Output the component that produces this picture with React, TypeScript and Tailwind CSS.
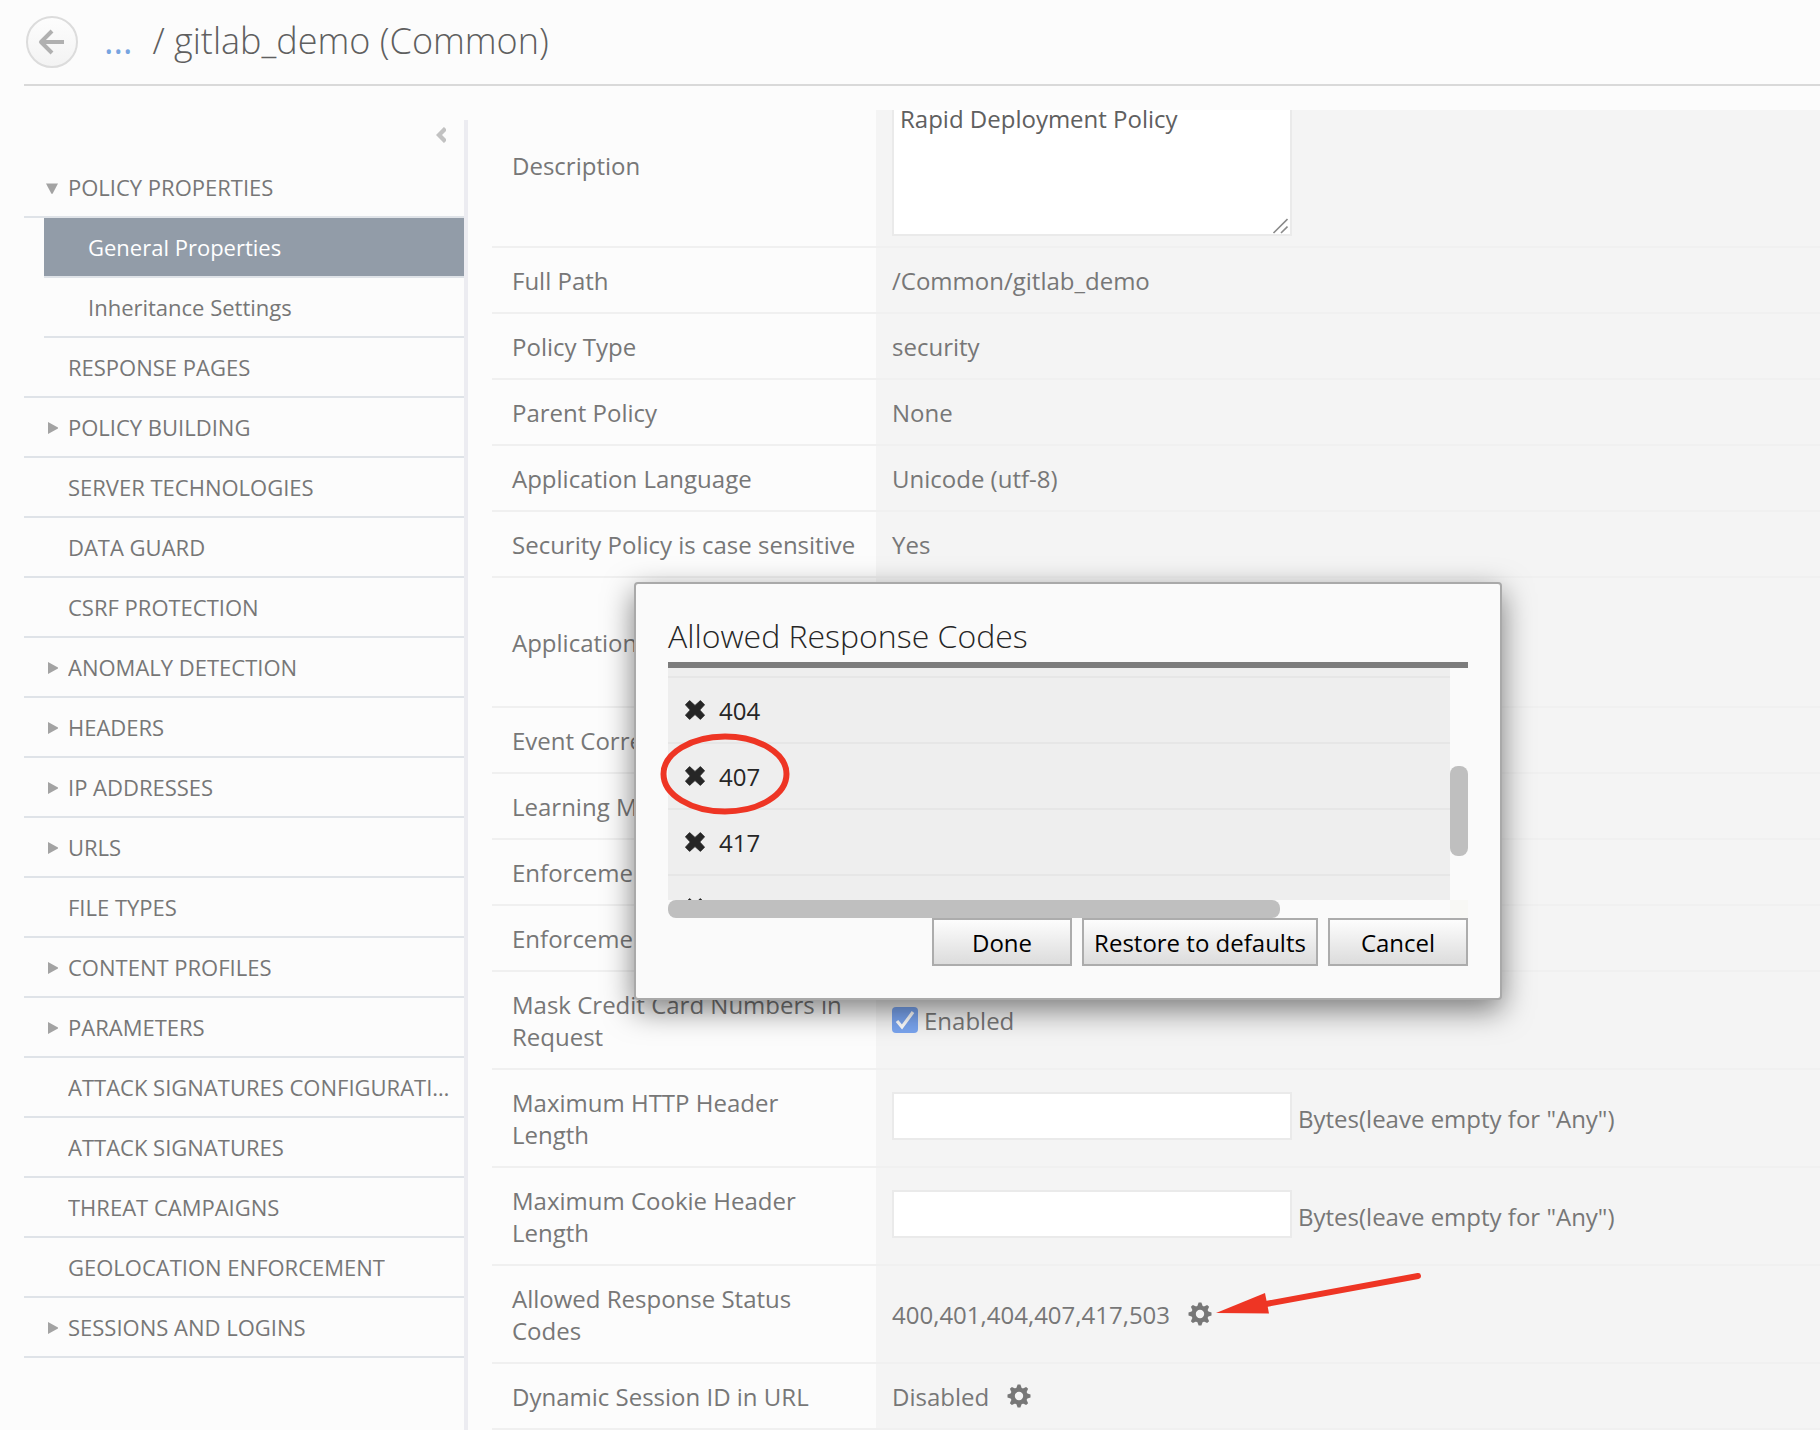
import type { ReactNode } from "react";

const GRAY_TRI = "#a3a3a3";

type NavItem = { text: string; arrow?: "down" | "right"; children?: { text: string; active?: boolean }[] };

const nav: NavItem[] = [
  {
    text: "POLICY PROPERTIES",
    arrow: "down",
    children: [{ text: "General Properties", active: true }, { text: "Inheritance Settings" }],
  },
  { text: "RESPONSE PAGES" },
  { text: "POLICY BUILDING", arrow: "right" },
  { text: "SERVER TECHNOLOGIES" },
  { text: "DATA GUARD" },
  { text: "CSRF PROTECTION" },
  { text: "ANOMALY DETECTION", arrow: "right" },
  { text: "HEADERS", arrow: "right" },
  { text: "IP ADDRESSES", arrow: "right" },
  { text: "URLS", arrow: "right" },
  { text: "FILE TYPES" },
  { text: "CONTENT PROFILES", arrow: "right" },
  { text: "PARAMETERS", arrow: "right" },
  { text: "ATTACK SIGNATURES CONFIGURATION" },
  { text: "ATTACK SIGNATURES" },
  { text: "THREAT CAMPAIGNS" },
  { text: "GEOLOCATION ENFORCEMENT" },
  { text: "SESSIONS AND LOGINS", arrow: "right" },
];

function Triangle({ dir }: { dir?: "down" | "right" }) {
  return (
    <svg className="w-4 h-4 shrink-0" viewBox="0 0 16 16" aria-hidden="true">
      {dir === "down" && <path d="M2 4.5h12L8.6 14.8H7.4z" fill={GRAY_TRI} />}
      {dir === "right" && <path d="M4 3v12L14 9.6V8.4z" fill={GRAY_TRI} />}
    </svg>
  );
}

function Gear() {
  return (
    <svg className="w-6 h-6" viewBox="0 0 24 24" aria-hidden="true">
      <g fill="#777777">
        {[0, 45, 90, 135, 180, 225, 270, 315].map((a) => (
          <path key={a} d="M9 5 10.6 0.5h2.8L15 5z" transform={`rotate(${a} 12 12)`} />
        ))}
      </g>
      <circle cx="12" cy="12" r="6.4" fill="none" stroke="#777777" strokeWidth="4.4" />
    </svg>
  );
}

function Cross() {
  return (
    <svg className="w-5 h-5" viewBox="0 0 20 20" aria-hidden="true">
      <path
        d="M4.6 0.6 10 5.4 15.4 0.6 19.6 4.8 14.8 10 19.6 15.2 15.4 19.4 10 14.6 4.6 19.4 0.4 15.2 5.2 10 0.4 4.8z"
        fill="#262626"
        stroke="#262626"
        strokeWidth="0.8"
        strokeLinejoin="round"
      />
    </svg>
  );
}

function Row({ label, htmlFor, tall, children }: { label: string; htmlFor?: string; tall?: boolean; children?: ReactNode }) {
  return (
    <tr className="border-b-2 border-[#f0f0f0]">
      <th
        scope="row"
        className={
          tall
            ? "w-96 h-[130px] pl-5 pr-4 pt-0.5 text-left align-middle font-normal whitespace-pre-line"
            : "w-96 pl-5 pr-4 pt-[17px] pb-[15px] text-left align-middle font-normal whitespace-pre-line"
        }
      >
        {htmlFor ? <label htmlFor={htmlFor}>{label}</label> : label}
      </th>
      <td className="bg-[#f4f4f4] pl-4 align-middle">
        {typeof children === "string" ? <div className="pt-0.5">{children}</div> : children}
      </td>
    </tr>
  );
}

function BytesField({ id }: { id: string }) {
  return (
    <div className="flex items-center gap-1.5">
      <input
        id={id}
        type="text"
        className="w-[400px] h-12 mb-1 px-2 border-2 border-[#eaeaea] bg-white outline-none"
      />
      <span className="pt-0.5">Bytes(leave empty for "Any")</span>
    </div>
  );
}

function Dialog() {
  const button =
    "h-12 pt-0.5 border-2 border-[#acacac] bg-linear-to-b from-[#fdfdfd] to-[#dcdcdc] text-black text-center";
  return (
    <div
      role="dialog"
      aria-labelledby="codes-title"
      className="absolute left-[634px] top-[582px] w-[868px] px-8 pt-7 pb-8 rounded border-2 border-[#a9a9a9] bg-[#fafafa] text-[#262626] shadow-[0_10px_30px_rgba(0,0,0,0.5)]"
    >
      <h2 id="codes-title" className="h-[50px] text-[32px] leading-[48px] font-light">
        Allowed Response Codes
      </h2>
      <div className="border-t-[6px] border-[#7c7c7c] flex">
        <ul className="flex-1 h-[232px] overflow-hidden bg-[#eeeeee]">
          <li className="h-2.5 border-b-2 border-[#e6e6e6]" />
          {["404", "407", "417", "503"].map((c) => (
            <li key={c} className="h-[66px] border-b-2 border-[#e6e6e6] flex items-center gap-3.5 pl-[17px]">
              <button type="button" aria-label={`Remove ${c}`}>
                <Cross />
              </button>
              <span className="pt-0.5">{c}</span>
            </li>
          ))}
        </ul>
        <div className="w-[18px] pt-[98px]">
          <div className="h-[90px] rounded-lg bg-[#bfbfbf]" />
        </div>
      </div>
      <div className="flex justify-between">
        <div className="w-[612px] h-[18px] rounded-lg bg-[#bfbfbf]" />
        <div className="w-[18px] bg-[#f8f8f5]" />
      </div>
      <div className="flex justify-end gap-2.5">
        <button type="button" className={`${button} w-[140px]`}>
          Done
        </button>
        <button type="button" className={`${button} w-[236px]`}>
          Restore to defaults
        </button>
        <button type="button" className={`${button} w-[140px]`}>
          Cancel
        </button>
      </div>
      <svg className="absolute left-[23px] top-[148px] w-[132px] h-[84px] pointer-events-none" viewBox="0 0 132 84" aria-hidden="true">
        <ellipse cx="66" cy="42" rx="61.5" ry="37.5" fill="none" stroke="#ee3524" strokeWidth="6" />
      </svg>
    </div>
  );
}

export default function App() {
  return (
    <div className="relative min-h-screen flex flex-col bg-[#fcfcfc] text-[#777777] text-2xl leading-8 font-['Open_Sans',sans-serif] overflow-hidden">
      <header className="ml-6 h-[86px] border-b-2 border-[#d9d9d9] flex items-center">
        <button
          type="button"
          aria-label="Back"
          className="ml-0.5 size-[52px] rounded-full border-2 border-[#dcdcdc] bg-linear-to-b from-[#fdfdfd] to-[#f3f3f3] flex items-center justify-center"
        >
          <svg
            className="w-7 h-7"
            viewBox="0 0 28 28"
            fill="none"
            stroke="#b0b0b0"
            strokeWidth="4"
            strokeLinejoin="round"
            aria-hidden="true"
          >
            <path d="M26 14H3M14 3 3 14l11 11" />
          </svg>
        </button>
        <h1 className="ml-[26px] pb-0.5 text-4xl leading-[48px] font-light text-[#5f5f5f] whitespace-nowrap">
          <a href="#" className="font-normal text-[#77a4e0]">
            ...
          </a>
          <span className="ml-5">/ gitlab_demo (Common)</span>
        </h1>
      </header>

      <div className="flex-1 flex">
        <aside className="w-[444px] ml-6 mt-[34px] border-r-4 border-[#ececf1] shrink-0 text-[22px]">
          <div className="h-[38px] pr-[18px] pt-[7px] flex justify-end items-start">
            <button type="button" aria-label="Collapse menu">
              <svg className="w-2.5 h-4" viewBox="0 0 10 16" fill="none" stroke="#c2c2c2" strokeWidth="4.4" aria-hidden="true">
                <path d="M9.5 1.5 3 8l6.5 6.5" />
              </svg>
            </button>
          </div>
          <nav>
            <ul>
              {nav.map((n) => (
                <li key={n.text}>
                  <a href="#" className="h-[60px] border-b-2 border-[#dfe3e8] flex items-center gap-2 pl-5 pr-3">
                    <Triangle dir={n.arrow} />
                    <span className="truncate">{n.text}</span>
                  </a>
                  {n.children && (
                    <ul className="ml-5">
                      {n.children.map((c) => (
                        <li key={c.text}>
                          <a
                            href="#"
                            className={
                              c.active
                                ? "h-[60px] border-b-2 border-[#dfe3e8] flex items-center pl-11 bg-[#929ca8] bg-clip-padding text-white"
                                : "h-[60px] border-b-2 border-[#dfe3e8] flex items-center pl-11"
                            }
                          >
                            {c.text}
                          </a>
                        </li>
                      ))}
                    </ul>
                  )}
                </li>
              ))}
            </ul>
          </nav>
        </aside>

        <main className="flex-1 ml-6 mt-6 overflow-hidden">
          <table className="w-full -mt-[26px] border-collapse table-fixed">
            <tbody>
              <Row label="Description" htmlFor="description">
                <div className="relative w-[400px] my-2.5">
                  <textarea
                    id="description"
                    className="block w-full h-[142px] px-1.5 py-[7px] border-2 border-[#eaeaea] bg-white text-[#606060] resize-none outline-none"
                    defaultValue="Rapid Deployment Policy"
                  />
                  <svg className="absolute right-1 bottom-0.5 w-4 h-4" viewBox="0 0 16 16" stroke="#8a8a8a" strokeWidth="1.6" aria-hidden="true">
                    <path d="M1.5 15 15.5 1M9 15l6.5-6.5" />
                  </svg>
                </div>
              </Row>
              <Row label="Full Path">/Common/gitlab_demo</Row>
              <Row label="Policy Type">security</Row>
              <Row label="Parent Policy">None</Row>
              <Row label="Application Language">Unicode (utf-8)</Row>
              <Row label="Security Policy is case sensitive">Yes</Row>
              <Row label="Application-Ready" tall />
              <Row label="Event Correlation" />
              <Row label="Learning Mode" />
              <Row label="Enforcement Mode" />
              <Row label="Enforcement Readiness" />
              <Row label={"Mask Credit Card Numbers in\nRequest"}>
                <label className="flex items-center gap-1.5">
                  <span className="relative size-[26px]">
                    <input type="checkbox" defaultChecked className="block appearance-none size-[26px] rounded bg-[#7aa5f0]" />
                    <svg className="absolute inset-0 size-[26px] pointer-events-none" viewBox="0 0 26 26" fill="none" stroke="#ffffff" strokeWidth="3.2" aria-hidden="true">
                      <path d="M5 14l5 6L21 5" />
                    </svg>
                  </span>
                  <span className="pt-0.5">Enabled</span>
                </label>
              </Row>
              <Row label={"Maximum HTTP Header\nLength"} htmlFor="max-http">
                <BytesField id="max-http" />
              </Row>
              <Row label={"Maximum Cookie Header\nLength"} htmlFor="max-cookie">
                <BytesField id="max-cookie" />
              </Row>
              <Row label={"Allowed Response Status\nCodes"}>
                <div className="flex items-center gap-[18px]">
                  <span className="pt-0.5">400,401,404,407,417,503</span>
                  <button type="button" aria-label="Edit allowed response codes" className="relative">
                    <Gear />
                    <svg className="absolute left-7 -top-8 w-[212px] h-14 pointer-events-none" viewBox="0 0 212 56" aria-hidden="true">
                      <path d="M50 34 202 6" stroke="#ee3524" strokeWidth="6" strokeLinecap="round" />
                      <path d="M0 43 49 23 53 43.5z" fill="#ee3524" />
                    </svg>
                  </button>
                </div>
              </Row>
              <Row label="Dynamic Session ID in URL">
                <div className="flex items-center gap-[18px]">
                  <span className="pt-0.5">Disabled</span>
                  <button type="button" aria-label="Edit dynamic session ID">
                    <Gear />
                  </button>
                </div>
              </Row>
            </tbody>
          </table>
        </main>
      </div>

      <Dialog />
    </div>
  );
}
